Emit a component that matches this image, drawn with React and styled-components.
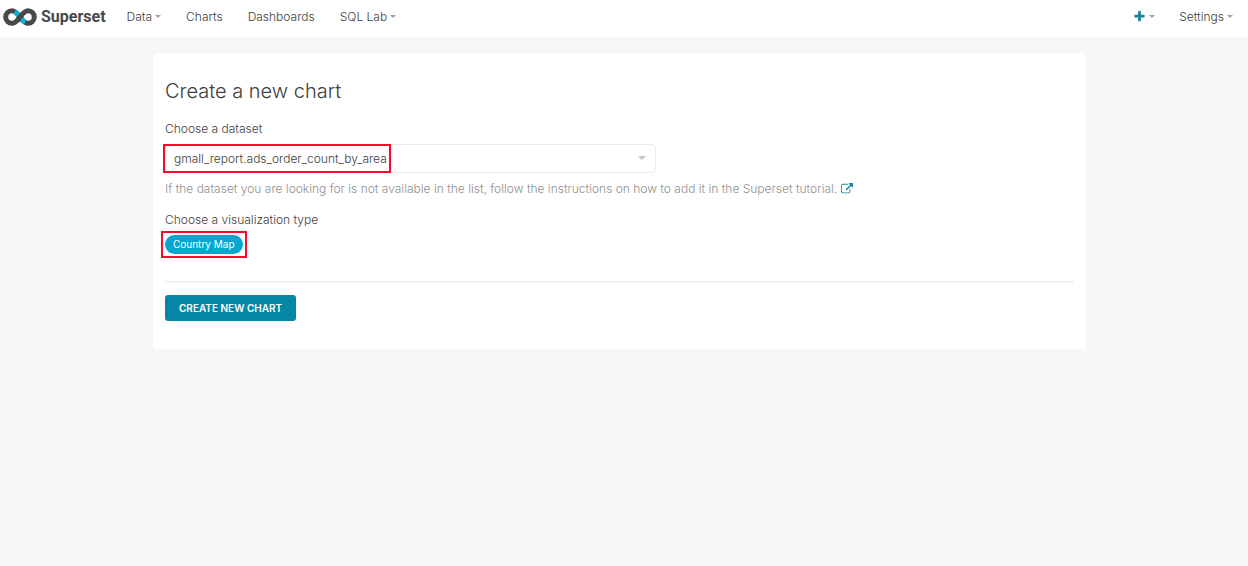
import React, { useState } from "react";
import styled, { createGlobalStyle } from "styled-components";

const GlobalStyle = createGlobalStyle`
  * {
    box-sizing: border-box;
  }
  body {
    margin: 0;
    background: #f7f7f7;
    color: #404040;
    font-family: Inter, "Liberation Sans", sans-serif;
    font-size: 12px;
    font-weight: 300;
    line-height: 16px;
  }
`;
const Navbar = styled.header`
  display: flex;
  align-items: center;
  height: 37px;
  padding: 0 15px 4px 3px;
  background: white;
`;
const Brand = styled.a`
  display: flex;
  align-items: center;
  gap: 4px;
  margin-right: 21px;
  color: #484848;
  font-family: Roboto, sans-serif;
  font-size: 16px;
  font-weight: bold;
  text-decoration: none;
`;
const Menu = styled.nav`
  display: flex;
  flex: ${(props) => (props.$grow ? 1 : "none")};
  gap: ${(props) => (props.$grow ? 25 : 24)}px;
`;
const NavLink = styled.a`
  color: #404040;
  text-decoration: none;
`;
const NavButton = styled.button`
  display: flex;
  align-items: center;
  gap: 3px;
  padding: 0;
  border: none;
  background: none;
  color: #404040;
  font: inherit;
  cursor: pointer;
`;
const Caret = styled.span`
  border: solid transparent;
  border-width: 3px 3px 0;
  border-top-color: #a0a0a0;
`;
const Main = styled.main`
  padding: 16px 162px 0 153px;
`;
const Card = styled.form`
  padding: 24px 12px 28px;
  border-radius: 4px;
  background: white;
`;
const Title = styled.h1`
  margin: 0 0 16px;
  font-size: 20px;
  font-weight: 300;
  line-height: 28px;
`;
const Label = styled.label`
  display: block;
  margin-bottom: 7px;
`;
const SelectBox = styled.div`
  position: relative;
  width: 54%;
  min-width: 240px;
`;
const Select = styled.select`
  display: block;
  width: 100%;
  height: 29px;
  padding: 0 32px 0 8px;
  appearance: none;
  border: 1px solid #ebebeb;
  border-radius: 4px;
  background: white;
  color: #404040;
  font: inherit;
`;
const SelectCaret = styled.span`
  position: absolute;
  top: 12px;
  right: 10px;
  border: solid transparent;
  border-width: 4px 4px 0;
  border-top-color: #c4c4c4;
  pointer-events: none;
`;
const Outline = styled.span`
  position: absolute;
  inset: ${(props) => props.$inset};
  width: ${(props) => props.$width};
  border: 2px solid #fb0a2a;
  pointer-events: none;
`;
const Hint = styled.p`
  margin: 8px 0 15px;
  color: #909090;
`;
const HintLink = styled.a`
  color: #1a85a0;
  svg {
    vertical-align: -2px;
  }
`;
const Field = styled.div`
  position: relative;
  width: max-content;
`;
const Tag = styled.button`
  display: block;
  height: 19px;
  padding: 0 8px;
  border: none;
  border-radius: 10px;
  background: #04a8cf;
  color: white;
  font-family: inherit;
  font-size: 10px;
  line-height: 19px;
`;
const Divider = styled.hr`
  margin: 27px 0 12px;
  border: none;
  border-top: 2px solid #f2f2f2;
`;
const Submit = styled.button`
  height: 26px;
  padding: 0 14px;
  border: none;
  border-radius: 3px;
  background: #0487a5;
  color: white;
  font-family: inherit;
  font-size: 10px;
  font-weight: 600;
  text-transform: uppercase;
`;

function Logo() {
  return (
    <svg width="34" height="18" viewBox="0 0 34 18" fill="none" strokeWidth="5">
      <path
        d="M17 9C14.5 5.700 12.500 2.700 9 2.700a6.300 6.300 0 0 0 0 12.600C12.500 15.300 14.500 12.300 17 9S21.500 2.700 25 2.700a6.300 6.300 0 0 1 0 12.600C21.500 15.300 19.500 12.300 17 9Z"
        stroke="#484848"
      />
      <path d="M11.800 3.500C14 5 15.300 6.800 17 9s3 4 5.200 5.500" stroke="#06b0d6" />
      <path d="M15 11.600 19 6.400" stroke="#484848" />
    </svg>
  );
}

function PlusIcon() {
  return (
    <svg width="13" height="13" viewBox="0 0 1792 1792" fill="#1985a0">
      <path d="M1600 736v192q0 40-28 68t-68 28h-416v416q0 40-28 68t-68 28h-192q-40 0-68-28t-28-68v-416h-416q-40 0-68-28t-28-68v-192q0-40 28-68t68-28h416v-416q0-40 28-68t68-28h192q40 0 68 28t28 68v416h416q40 0 68 28t28 68z" />
    </svg>
  );
}

function ExternalIcon() {
  return (
    <svg width="12" height="12" viewBox="0 0 1792 1792" fill="currentColor">
      <path d="M1408 928v320q0 119-84.500 203.500t-203.500 84.500h-832q-119 0-203.500-84.500t-84.500-203.500v-832q0-119 84.500-203.500t203.500-84.500h704q14 0 23 9t9 23v64q0 14-9 23t-23 9h-704q-66 0-113 47t-47 113v832q0 66 47 113t113 47h832q66 0 113-47t47-113v-320q0-14 9-23t23-9h64q14 0 23 9t9 23zm384-864v512q0 26-19 45t-45 19-45-19l-176-176-652 652q-10 10-23 10t-23-10l-114-114q-10-10-10-23t10-23l652-652-176-176q-19-19-19-45t19-45 45-19h512q26 0 45 19t19 45z" />
    </svg>
  );
}

function App() {
  const [dataset, setDataset] = useState("gmall_report.ads_order_count_by_area");
  return (
    <>
      <GlobalStyle />
      <Navbar>
        <Brand href="#">
          <Logo />
          Superset
        </Brand>
        <Menu $grow>
          <NavButton>
            Data <Caret />
          </NavButton>
          <NavLink href="#charts">Charts</NavLink>
          <NavLink href="#dashboards">Dashboards</NavLink>
          <NavButton>
            SQL Lab <Caret />
          </NavButton>
        </Menu>
        <Menu>
          <NavButton aria-label="New">
            <PlusIcon />
            <Caret />
          </NavButton>
          <NavButton>
            Settings <Caret />
          </NavButton>
        </Menu>
      </Navbar>
      <Main>
        <Card onSubmit={(e) => e.preventDefault()}>
          <Title>Create a new chart</Title>
          <Label htmlFor="dataset">Choose a dataset</Label>
          <SelectBox>
            <Select
              id="dataset"
              value={dataset}
              onChange={(e) => setDataset(e.target.value)}
            >
              <option>gmall_report.ads_order_count_by_area</option>
            </Select>
            <SelectCaret />
            <Outline $inset="0 auto 0 -2px" $width="228px" />
          </SelectBox>
          <Hint>
            If the dataset you are looking for is not available in the list,
            follow the instructions on how to add it in the Superset tutorial.{" "}
            <HintLink href="#tutorial" aria-label="Superset tutorial">
              <ExternalIcon />
            </HintLink>
          </Hint>
          <Label htmlFor="viz-type">Choose a visualization type</Label>
          <Field>
            <Tag id="viz-type" type="button">
              Country Map
            </Tag>
            <Outline $inset="-4px -4px -4px -4px" $width="auto" />
          </Field>
          <Divider />
          <Submit type="submit">Create new chart</Submit>
        </Card>
      </Main>
    </>
  );
}

export default App;
